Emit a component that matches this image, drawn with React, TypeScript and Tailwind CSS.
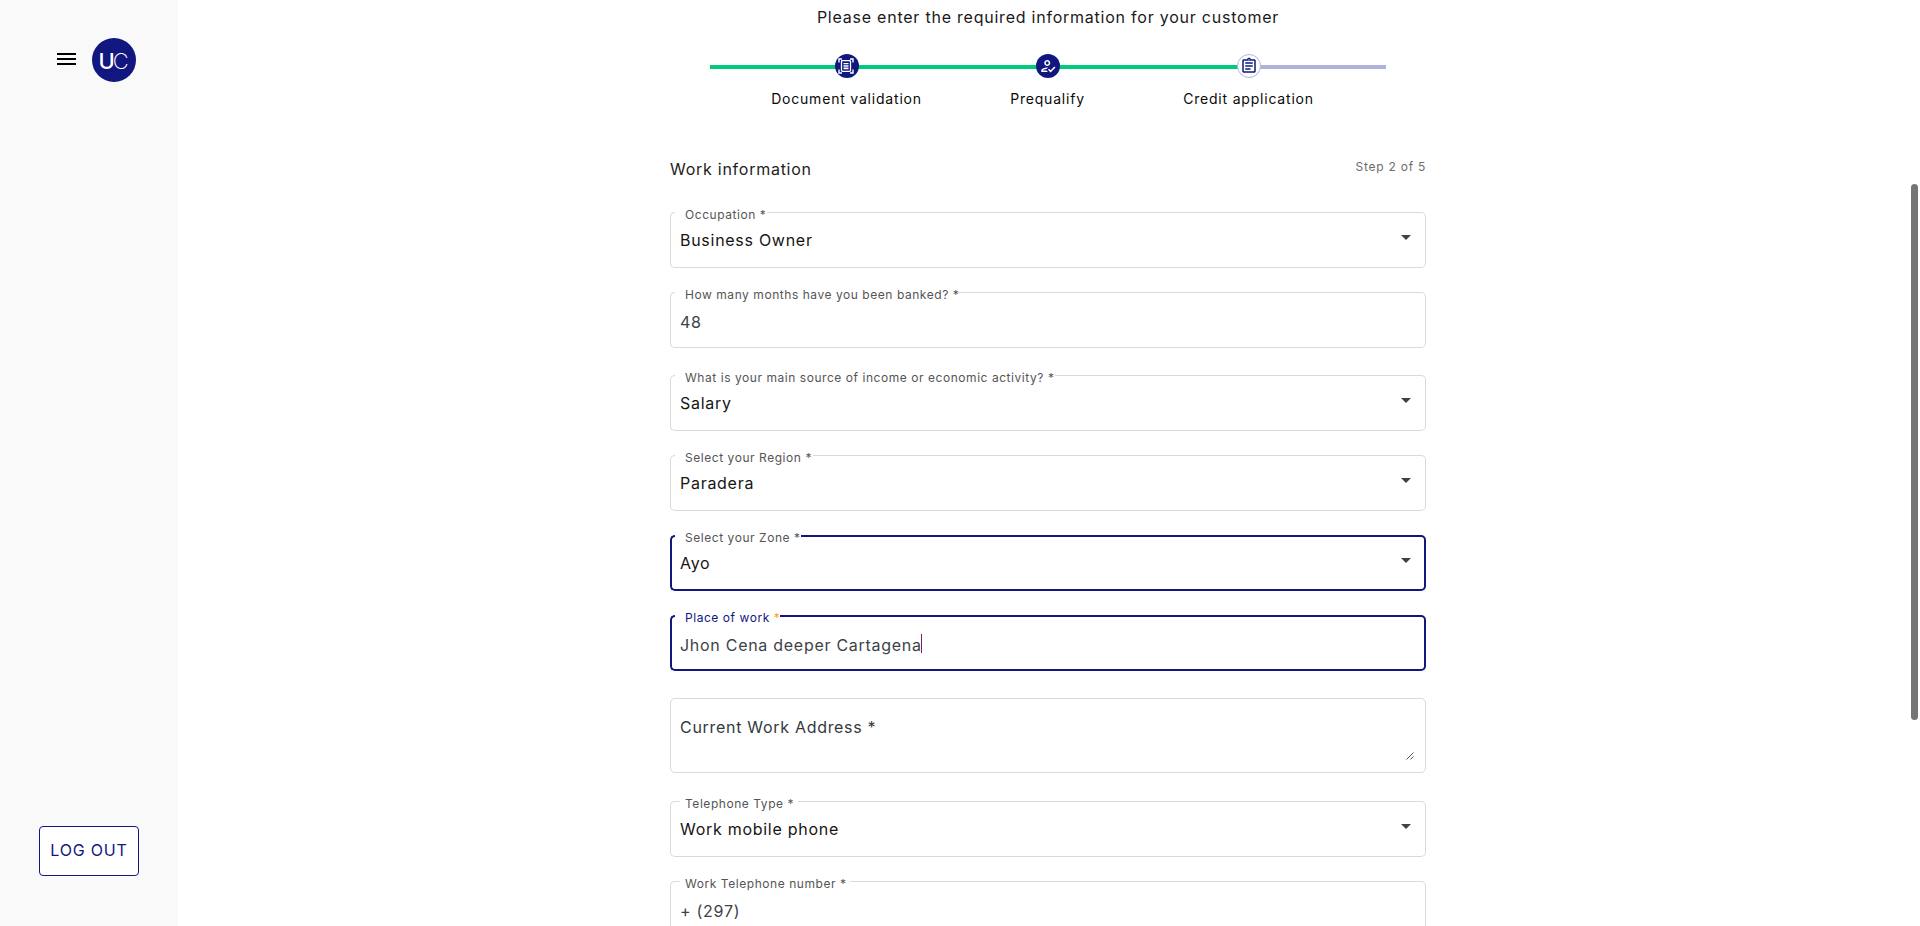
import type { ReactNode } from "react";
import { MdOutlineAssignment, MdOutlineHowToReg } from "react-icons/md";

type FieldProps = {
  label: string;
  value: string;
  kind?: "select" | "input";
  focused?: boolean;
  active?: boolean;
  lead?: string;
  notch: string;
  className?: string;
};

function Caret() {
  return (
    <svg width="10" height="5" viewBox="0 0 10 5" className="mr-[15px] mt-[23px] shrink-0 self-start fill-[#3c4245]">
      <path d="M0 0h10L5 5z" />
    </svg>
  );
}

function ScanIcon() {
  return (
    <svg width="16" height="16" viewBox="0 0 16 16" fill="none" className="-ml-px stroke-white">
      <path d="M1 4.5V1h3M12 1h3v3.500M15 11.500V15h-3M4 15H1v-3.500" strokeWidth="1.400" />
      <rect x="3.500" y="2.700" width="9" height="10.600" rx="0.800" strokeWidth="1.300" />
      <path d="M5.500 5.500h5M5.500 7.200h5M5.500 8.900h5M5.500 10.600h5" strokeWidth="1.100" />
    </svg>
  );
}

function Field({ label, value, kind = "input", focused, active, lead = "w-[5px]", notch, className = "" }: FieldProps) {
  const line = focused ? "border-[#11177f]" : "border-[#d9d9d9]";
  const top = focused ? "border-t-2" : "border-t";
  const bottom = focused ? "border-b-2" : "border-b";
  const left = focused ? "border-l-2" : "border-l";
  const right = focused ? "border-r-2" : "border-r";
  const labelPad = lead === "w-[5px]" ? "pl-[10px]" : "pl-[5px]";
  return (
    <div className={`grid h-14 shrink-0 ${className}`}>
      <div className="col-start-1 row-start-1 flex">
        <div className={`${lead} rounded-l-[5px] ${line} ${top} ${bottom} ${left}`} />
        <div className={`${notch} ${line} ${bottom}`}>
          <div
            className={`-mt-[5px] ${labelPad} whitespace-nowrap text-[12px] leading-4 tracking-[0.55px] ${active ? "text-[#11177f]" : "text-[#555]"}`}
          >
            {label} <span className={active ? "text-[#ff9d1c]" : ""}>*</span>
          </div>
        </div>
        <div className={`flex-1 rounded-r-[5px] ${line} ${top} ${bottom} ${right}`} />
      </div>
      <div className="col-start-1 row-start-1 flex justify-between pl-[10px]">
        <div
          className={`flex text-[16px] leading-6 tracking-[0.72px] ${kind === "select" ? "pt-4 text-[#151515]" : "pt-[18px] text-[#3c4347]"}`}
        >
          {value}
          {active && <span className="-ml-px mt-[1px] h-[19px] w-px bg-[#7a1a6a]" />}
        </div>
        {kind === "select" && <Caret />}
      </div>
    </div>
  );
}

function Step({ label, pending, children }: { label: string; pending?: boolean; children: ReactNode }) {
  return (
    <div className="flex w-[201px] flex-col items-center">
      <div
        className={`flex size-6 items-center justify-center rounded-full text-[18px] ${
          pending ? "border border-[#b0b3d9] bg-white text-[#11177f]" : "bg-[#11177f] text-white"
        }`}
      >
        {children}
      </div>
      <div className="mt-[11px] whitespace-nowrap text-[14px] leading-5 tracking-[0.8px] text-[#0a0a0a]">{label}</div>
    </div>
  );
}

function Sidebar() {
  return (
    <aside className="flex w-[178px] shrink-0 flex-col bg-[#f9f9f9]">
      <div className="mt-[38px] flex h-11 items-center pl-[57px]">
        <div className="-mt-[2px] flex w-[19px] flex-col gap-[3px]">
          <span className="h-[2px] bg-black" />
          <span className="h-[2px] bg-black" />
          <span className="h-[2px] bg-black" />
        </div>
        <div className="ml-[15.500px] flex size-[44px] items-center justify-center rounded-full bg-[#11177f] pt-[2px] text-[22px] leading-none text-white">
          <span className="font-medium">U</span>
          <span className="-ml-[2px] font-extralight">C</span>
        </div>
      </div>
      <button className="mx-auto mb-[50px] mt-auto h-[50px] w-[100px] rounded-[4px] border border-[#11177f] bg-white pb-[2px] text-[16px] tracking-[0.8px] text-[#11177f]">
        LOG OUT
      </button>
    </aside>
  );
}

export default function App() {
  return (
    <div className="relative flex h-[926px] w-[1920px] overflow-hidden bg-white font-['Inter',sans-serif]">
      <Sidebar />
      <main className="flex min-w-0 flex-1 flex-col pl-[492px] pt-[5px]">
        <div className="flex w-[756px] flex-col">
          <h1 className="text-center text-[16px] leading-6 tracking-[0.77px] text-[#1a1a1a]">
            Please enter the required information for your customer
          </h1>
          <div className="mx-10 mt-[25px] grid">
            <div className="col-start-1 row-start-1 mt-[11px] flex h-1">
              <div className="w-[539px] bg-[#00cb7c]" />
              <div className="flex-1 bg-[#b0b3d9]" />
            </div>
            <div className="col-start-1 row-start-1 flex pl-[36px]">
              <Step label="Document validation">
                <ScanIcon />
              </Step>
              <Step label="Prequalify">
                <MdOutlineHowToReg />
              </Step>
              <Step label="Credit application" pending>
                <MdOutlineAssignment className="shrink-0" />
              </Step>
            </div>
          </div>
          <div className="mt-[48px] flex items-start justify-between">
            <h2 className="text-[16px] leading-6 tracking-[0.74px] text-[#222]">Work information</h2>
            <span className="text-[12px] leading-5 tracking-[0.75px] text-[#6c6c6c]">Step 2 of 5</span>
          </div>
          <div className="mt-[31px] flex flex-col">
            <Field label="Occupation" value="Business Owner" kind="select" notch="w-[92px]" />
            <Field label="How many months have you been banked?" value="48" notch="w-[283px]" className="mt-6" />
            <Field
              label="What is your main source of income or economic activity?"
              value="Salary"
              kind="select"
              notch="w-[380px]"
              className="mt-[27px]"
            />
            <Field label="Select your Region" value="Paradera" kind="select" notch="w-[138px]" className="mt-6" />
            <Field label="Select your Zone" value="Ayo" kind="select" focused notch="w-[126px]" className="mt-6" />
            <Field label="Place of work" value="Jhon Cena deeper Cartagena" focused active notch="w-[105px]" className="mt-6" />
            <div className="mt-[27px] flex h-[75px] justify-between rounded-[5px] border border-[#d9d9d9] pl-[9px] pr-[11px]">
              <span className="pt-4 text-[16px] leading-6 tracking-[0.7px] text-[#333a3e]">Current Work Address *</span>
              <svg width="8" height="8" viewBox="0 0 8 8" className="mb-[12px] self-end stroke-[#444]" fill="none">
                <path d="M0.5 7.5l7-7M4.5 7.5l3-3" strokeWidth="0.9" />
              </svg>
            </div>
            <Field
              label="Telephone Type"
              value="Work mobile phone"
              kind="select"
              lead="w-[10px]"
              notch="w-[118px]"
              className="mt-7"
            />
            <Field label="Work Telephone number" value="+ (297)" lead="w-[10px]" notch="w-[170px]" className="mt-6" />
          </div>
        </div>
      </main>
      <div className="absolute right-[2px] top-[184px] h-[536px] w-[7px] rounded-full bg-[#757575]" />
    </div>
  );
}
